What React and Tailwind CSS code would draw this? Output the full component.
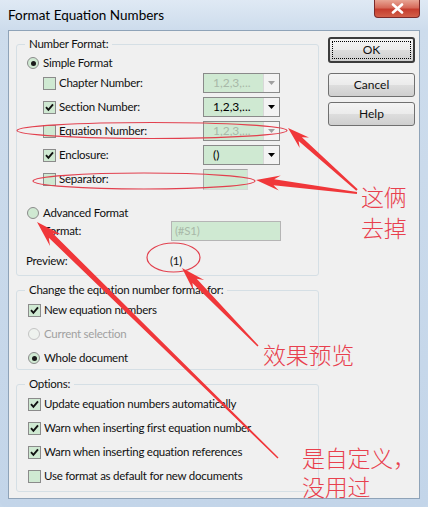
import React from "react";

function Check({ checked }) {
  return (
    <span className="w-[13px] h-[13px] shrink-0 border border-[#8b8b8b] bg-[#cfe9d2] flex items-center justify-center">
      {checked && (
        <svg width="9" height="9" viewBox="0 0 9 9">
          <path d="M1 4.2 L3.4 6.8 L8 1.4" stroke="#111" strokeWidth="1.9" fill="none" />
        </svg>
      )}
    </span>
  );
}

function Radio({ checked, disabled }) {
  return (
    <span
      className={
        "w-[12px] h-[12px] shrink-0 rounded-full border flex items-center justify-center " +
        (disabled ? "border-[#c4c4c4] bg-[#eef2ee]" : "border-[#8b8b8b] bg-[#cfe9d2]")
      }
    >
      {checked && <span className="w-[5px] h-[5px] rounded-full bg-[#1a1a1a]" />}
    </span>
  );
}

function Drop({ text, disabled }) {
  return (
    <div className="w-[77px] h-[20px] flex border border-[#8a8a8a] bg-[#cfe9d2]">
      <div
        className={
          "flex-1 flex items-center pl-[9px] text-[12px] tracking-[0px] " +
          (disabled ? "text-[#a8b8a8]" : "text-black")
        }
      >
        {text}
      </div>
      <div className="w-[16px] flex items-center justify-center bg-[#f3f3f3] border-l border-[#d8d8d8]">
        <svg width="7" height="4" viewBox="0 0 7 4">
          <path d="M0 0 L7 0 L3.5 4 Z" fill={disabled ? "#a0a0a0" : "#000"} />
        </svg>
      </div>
    </div>
  );
}

function Btn({ children, def }) {
  return (
    <div
      className={
        "w-[87px] flex items-center justify-center rounded-[3px] text-[12px] tracking-[0px] bg-[linear-gradient(#f4f4f4_0%,#ebebeb_50%,#dddddd_51%,#cfcfcf_100%)] " +
        (def ? "h-[26px] border-2 border-[#3c3c3c] p-[2px]" : "h-[24px] border border-[#707070]")
      }
    >
      {def ? (
        <div className="w-full h-full border border-dotted border-black flex items-center justify-center">
          {children}
        </div>
      ) : (
        children
      )}
    </div>
  );
}

function arrowPts(x1, y1, x2, y2, w0, w1, hl, hw) {
  const dx = x2 - x1, dy = y2 - y1;
  const len = Math.hypot(dx, dy);
  const ux = dx / len, uy = dy / len;
  const px = -uy, py = ux;
  const jx = x2 - ux * hl * 0.75, jy = y2 - uy * hl * 0.75;
  const bx = x2 - ux * hl, by = y2 - uy * hl;
  const pts = [
    [x1 + (px * w0) / 2, y1 + (py * w0) / 2],
    [jx + (px * w1) / 2, jy + (py * w1) / 2],
    [bx + (px * hw) / 2, by + (py * hw) / 2],
    [x2, y2],
    [bx - (px * hw) / 2, by - (py * hw) / 2],
    [jx - (px * w1) / 2, jy - (py * w1) / 2],
    [x1 - (px * w0) / 2, y1 - (py * w0) / 2],
  ];
  return pts.map((p) => p[0].toFixed(1) + "," + p[1].toFixed(1)).join(" ");
}

const cn = "absolute text-[23px] leading-[23px] font-light text-[#e8404e] font-['Noto_Sans_CJK_SC',sans-serif] pointer-events-none whitespace-nowrap";

export default function App() {
  return (
    <div className="relative w-[428px] h-[507px] overflow-hidden bg-[#c5d7ea] font-['Lato',sans-serif] text-[11.5px] tracking-[-0.25px] text-[#111]">
      <div className="flex flex-col w-full h-full bg-[linear-gradient(180deg,#dfe9f4_0%,#cddcec_30px,#c3d5e9_100%)] rounded-b-[6px]">
        {/* title bar */}
        <div className="h-[30px] flex items-start shrink-0">
          <div className="pl-[8px] pt-[6px] text-[13.5px] tracking-[0px] leading-[18px] text-black">Format Equation Numbers</div>
          <div className="ml-auto mr-[8px] w-[46px] h-[18px] rounded-b-[4px] border border-t-0 border-[#7a2a2a] bg-[linear-gradient(#e8a594_0%,#d66a5a_45%,#c53d2e_55%,#d2604a_100%)] flex items-center justify-center">
            <svg width="13" height="11" viewBox="0 0 13 11">
              <path d="M2 1.5 L11 9.5 M11 1.5 L2 9.5" stroke="#fff" strokeWidth="2.6" strokeLinecap="round" />
            </svg>
          </div>
        </div>

        {/* client area */}
        <div className="mx-[8px] h-[469px] border border-[#8fa3b8] bg-[#f0f0f0] flex pl-[7px] pt-[5px]">
          <div className="w-[303px] flex flex-col">
            {/* Number Format */}
            <fieldset className="h-[240px] border border-[#d5dfe5] rounded-[3px]">
              <legend className="ml-[8px] px-[4px] leading-[16px]">Number Format:</legend>
              <div className="flex items-center h-[22px] pl-[10px] gap-[4px]">
                <Radio checked />
                <span>Simple Format</span>
              </div>
              <div className="-mt-[3px] flex flex-col">
                {[
                  ["Chapter Number:", false, "1,2,3,...", true],
                  ["Section Number:", true, "1,2,3,...", false],
                  ["Equation Number:", false, "1,2,3,...", true],
                  ["Enclosure:", true, "()", false],
                ].map(([label, chk, val, dis]) => (
                  <div key={label} className="flex items-center h-[24px] pl-[26px]">
                    <div className="w-[160px] flex items-center gap-[3px]">
                      <Check checked={chk} />
                      <span>{label}</span>
                    </div>
                    <Drop text={val} disabled={dis} />
                  </div>
                ))}
                <div className="flex items-center h-[24px] pl-[26px]">
                  <div className="w-[160px] flex items-center gap-[3px]">
                    <Check />
                    <span>Separator:</span>
                  </div>
                  <div className="w-[45px] h-[21px] border border-[#a5a5a5] border-b-[#d8d8d8] border-r-[#d8d8d8] bg-[#cfe9d2]" />
                </div>
              </div>
              <div className="mt-[12px] flex items-center h-[20px] pl-[10px] gap-[4px]">
                <Radio />
                <span>Advanced Format</span>
              </div>
              <div className="-mt-[3px] flex items-center h-[22px] pl-[27px]">
                <div className="w-[127px]">Format:</div>
                <div className="w-[110px] h-[20px] border border-[#b5b5b5] bg-[#cfe9d2] flex items-center pl-[3px] text-[#a8b8a8]">
                  (#S1)
                </div>
              </div>
              <div className="mt-[9px] flex items-center h-[20px] pl-[9px]">
                <div className="w-[144px]">Preview:</div>
                <div>(1)</div>
              </div>
            </fieldset>

            {/* Change for */}
            <fieldset className="mt-[6px] h-[88px] border border-[#d5dfe5] rounded-[3px]">
              <legend className="ml-[8px] px-[4px] leading-[16px]">Change the equation number format for:</legend>
              <div className="flex items-center h-[24px] pl-[11px] gap-[3px]">
                <Check checked />
                <span>New equation numbers</span>
              </div>
              <div className="flex items-center h-[24px] pl-[11px] gap-[4px]">
                <Radio disabled />
                <span className="text-[#a0a0a0]">Current selection</span>
              </div>
              <div className="flex items-center h-[24px] pl-[11px] gap-[4px]">
                <Radio checked />
                <span>Whole document</span>
              </div>
            </fieldset>

            {/* Options */}
            <fieldset className="mt-[6px] h-[116px] border border-[#d5dfe5] rounded-[3px]">
              <legend className="ml-[8px] px-[4px] leading-[16px]">Options:</legend>
              {[
                ["Update equation numbers automatically", true],
                ["Warn when inserting first equation number", true],
                ["Warn when inserting equation references", true],
                ["Use format as default for new documents", false],
              ].map(([t, c]) => (
                <div key={t} className="flex items-center h-[24px] pl-[11px] gap-[3px]">
                  <Check checked={c} />
                  <span>{t}</span>
                </div>
              ))}
            </fieldset>
          </div>

          {/* buttons */}
          <div className="ml-[9px] mt-[1px] flex flex-col">
            <Btn def>OK</Btn>
            <div className="mt-[10px]">
              <Btn>Cancel</Btn>
            </div>
            <div className="mt-[5px]">
              <Btn>Help</Btn>
            </div>
          </div>
        </div>
      </div>

      {/* annotations */}
      <svg className="absolute inset-0 pointer-events-none" width="428" height="507" viewBox="0 0 428 507">
        <g fill="none" stroke="#e2404e" strokeWidth="1.2">
          <ellipse cx="152" cy="130.5" rx="135" ry="8" />
          <ellipse cx="144" cy="181" rx="111" ry="8" />
          <ellipse cx="173.5" cy="257.5" rx="26.5" ry="14.5" />
        </g>
        <g fill="#f0373a">
          <polygon points={arrowPts(357, 190, 288, 128, 2, 5, 22, 14)} />
          <polygon points={arrowPts(357, 193, 256, 180, 2, 6, 24, 15)} />
          <polygon points={arrowPts(278, 458, 37, 222, 1.5, 6, 26, 16)} />
          <polygon points={arrowPts(258, 346, 182, 268, 1.5, 6, 24, 15)} />
        </g>
      </svg>
      <div className={cn + " left-[361px] top-[185px] text-[22px] leading-[22px]"}>这俩</div>
      <div className={cn + " left-[361px] top-[216px] text-[22px] leading-[22px]"}>去掉</div>
      <div className={cn + " left-[263px] top-[343px]"}>效果预览</div>
      <div className={cn + " left-[302px] top-[446px]"}>是自定义，</div>
      <div className={cn + " left-[302px] top-[475px]"}>没用过</div>
    </div>
  );
}
